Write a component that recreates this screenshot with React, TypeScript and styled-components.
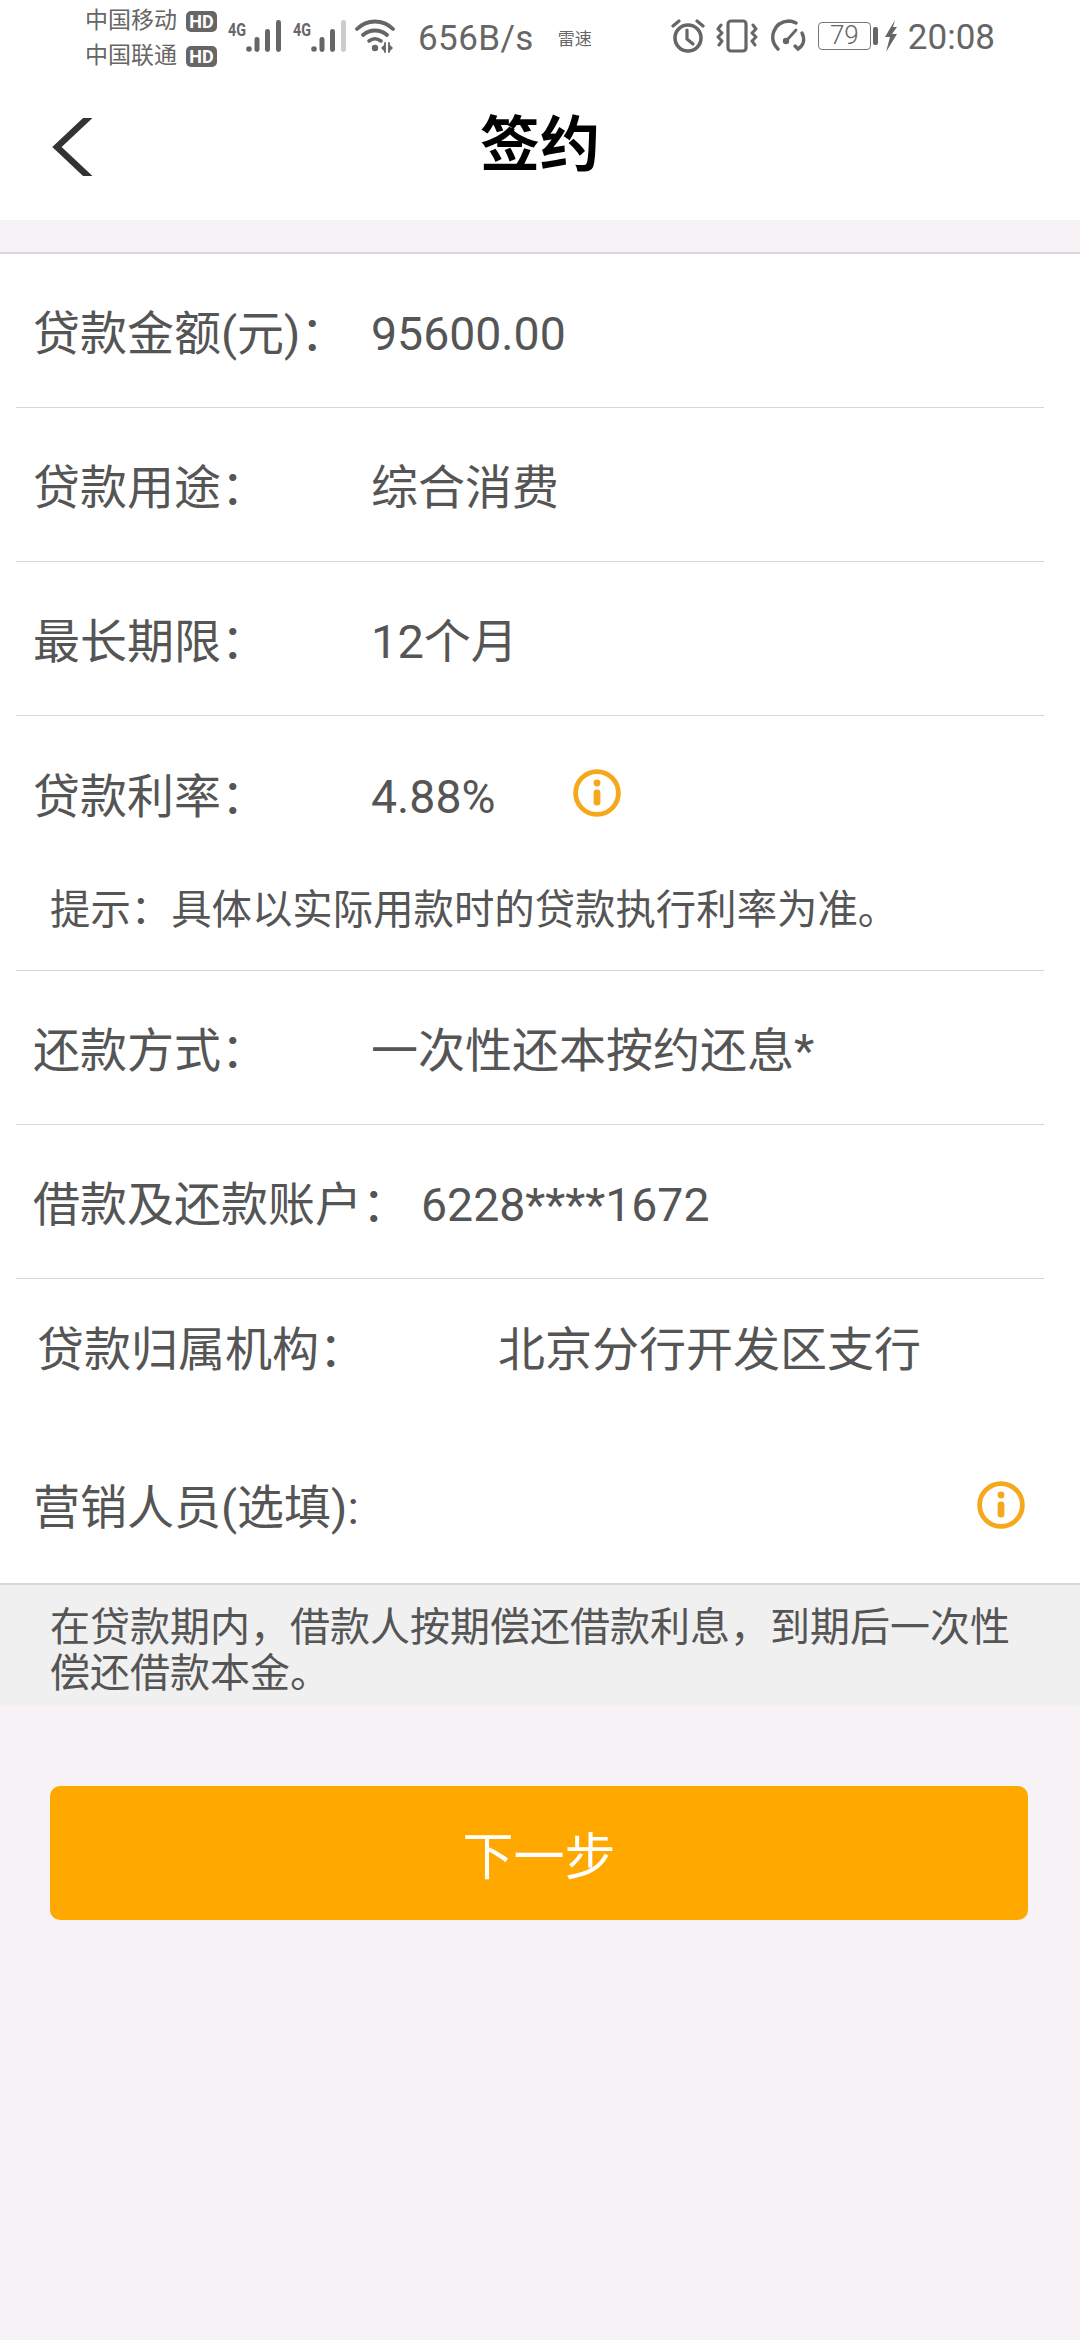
import React from 'react';
import styled, { createGlobalStyle } from 'styled-components';

const FONT = `Roboto, "Noto Sans CJK SC", sans-serif`;

const GlobalStyle = createGlobalStyle`
  html, body {
    margin: 0;
    padding: 0;
    background: #f6f2f6;
    font-family: ${FONT};
  }
`;

const Signal: React.FC<{ weak?: boolean }> = ({ weak }) => (
  <SignalWrap>
    <SignalTag>4G</SignalTag>
    <svg width="35" height="34" viewBox="0 0 35 34">
      <circle cx="3" cy="30" r="2.8" fill="#666" />
      <rect x="8.5" y="18" width="5" height="15" rx="2.4" fill="#666" />
      <rect x="19" y="10" width="5" height="23" rx="2.4" fill="#666" />
      <rect x="30" y="1" width="5" height="32" rx="2.4" fill={weak ? '#ccc' : '#666'} />
    </svg>
  </SignalWrap>
);

const Wifi = () => (
  <svg width="42" height="34" viewBox="0 0 42 34" fill="none" stroke="#666" strokeLinecap="round">
    <path d="M2 10C12 0 28 0 38 10" strokeWidth="3.8" />
    <path d="M8 16C15 10 25 10 32 16" strokeWidth="3.8" />
    <path d="M14 22C18 19 22 19 26 22" strokeWidth="3.6" />
    <circle cx="20" cy="29" r="3.2" fill="#666" stroke="none" />
    <path d="M30 24v9M34 24v9" strokeWidth="1.8" />
    <path d="M30 25l-4 4 4 4zM34 25l4 4-4 4z" fill="#666" stroke="none" />
  </svg>
);

const Alarm = () => (
  <svg width="34" height="34" viewBox="0 0 34 34" fill="none" stroke="#666" strokeLinecap="round">
    <circle cx="17" cy="19" r="13" strokeWidth="3.6" />
    <path d="M16 11v9l6 5" strokeWidth="3.2" />
    <path d="M2 7l6-5M32 7l-6-5" strokeWidth="3.2" />
  </svg>
);

const Vibrate = () => (
  <svg width="42" height="34" viewBox="0 0 42 34" fill="none" stroke="#666" strokeLinecap="round" strokeLinejoin="round">
    <rect x="12" y="2" width="18" height="30" rx="3" strokeWidth="3.2" />
    <path d="M5 6l-3 4 4 4-4 4 4 4-3 4" strokeWidth="3" />
    <path d="M37 6l3 4-4 4 4 4-4 4 3 4" strokeWidth="3" />
  </svg>
);

const Gauge = () => (
  <svg width="38" height="34" viewBox="0 0 38 34" fill="none" stroke="#666" strokeLinecap="round">
    <path d="M9 30C-1 20 4 3 20 2c3 0 5 1 7 2" strokeWidth="3.4" />
    <path d="M33 14c3 6 2 12-4 16l-3-3" strokeWidth="3.4" />
    <path d="M18 21l9-10" strokeWidth="2.8" />
    <circle cx="17" cy="22" r="3.2" fill="#666" stroke="none" />
  </svg>
);

const InfoIcon = () => (
  <svg width="48" height="48" viewBox="0 0 48 48">
    <circle cx="24" cy="24" r="21.4" fill="none" stroke="#f5a81c" strokeWidth="4.8" />
    <circle cx="24" cy="14" r="3.4" fill="#f5a81c" />
    <rect x="20.6" y="20.5" width="6.8" height="16" rx="3.2" fill="#f5a81c" />
  </svg>
);

const Row: React.FC<{
  label: string;
  value: string;
  valueAt?: number;
  numeric?: boolean;
}> = ({ label, value, valueAt = 338, numeric }) => (
  <RowBox>
    <Label $width={valueAt}>{label}</Label>
    <Value $numeric={numeric}>{value}</Value>
  </RowBox>
);

export default function App() {
  return (
    <Page>
      <GlobalStyle />
      <StatusBar>
        <Carriers>
          <CarrierLine>
            中国移动<HdBadge>HD</HdBadge>
          </CarrierLine>
          <CarrierLine>
            中国联通<HdBadge>HD</HdBadge>
          </CarrierLine>
        </Carriers>
        <Signal />
        <Signal weak />
        <WifiSlot>
          <Wifi />
        </WifiSlot>
        <Speed>656B/s</Speed>
        <AppTag>雷速</AppTag>
        <StatusRight>
          <Alarm />
          <Vibrate />
          <Gauge />
          <Battery>79</Battery>
          <BatteryNub />
          <BoltIcon width="14" height="32" viewBox="0 0 14 32">
            <path d="M11 0L1 17h5L2 32l11-18H8l5-7H9z" fill="#666" />
          </BoltIcon>
          <Clock>20:08</Clock>
        </StatusRight>
      </StatusBar>

      <Header>
        <BackButton>
          <svg width="40" height="58" viewBox="0 0 40 58" fill="none">
            <path d="M39 -3L5 29l34 32" stroke="#333" strokeWidth="6.5" />
          </svg>
        </BackButton>
        <Title>签约</Title>
      </Header>

      <Form>
        <Row label="贷款金额(元)：" value="95600.00" numeric />
        <Row label="贷款用途：" value="综合消费" />
        <Row label="最长期限：" value="12个月" />
        <RateBlock>
          <RateRow>
            <Label $width={338}>贷款利率：</Label>
            <RateValue $numeric>4.88%</RateValue>
            <InfoIcon />
          </RateRow>
          <Hint>提示：具体以实际用款时的贷款执行利率为准。</Hint>
        </RateBlock>
        <Row label="还款方式：" value="一次性还本按约还息*" />
        <Row label="借款及还款账户：" value="6228****1672" valueAt={388} numeric />
        <OrgRow>
          <Label $width={461}>贷款归属机构：</Label>
          <Value>北京分行开发区支行</Value>
        </OrgRow>
        <SalesRow>
          <Label $width={500}>营销人员(选填):</Label>
          <InfoIcon />
        </SalesRow>
      </Form>

      <Note>在贷款期内，借款人按期偿还借款利息，到期后一次性偿还借款本金。</Note>

      <NextButton>下一步</NextButton>
    </Page>
  );
}

// Styled Components

const Page = styled.div`
  width: 1080px;
  height: 2340px;
  background: #f6f2f6;
  overflow: hidden;
  font-family: ${FONT};
`;

const StatusBar = styled.div`
  height: 72px;
  background: #fff;
  display: flex;
  align-items: center;
  padding-left: 85px;
  color: #666;
  box-sizing: border-box;
`;

const Carriers = styled.div`
  width: 143px;
  display: flex;
  flex-direction: column;
  gap: 5px;
  margin-top: 5px;
`;

const CarrierLine = styled.div`
  display: flex;
  align-items: center;
  font-size: 23px;
  line-height: 30px;
`;

const HdBadge = styled.span`
  margin-left: 9px;
  width: 31px;
  height: 21px;
  border-radius: 5px;
  background: #666;
  color: #fff;
  font-size: 18px;
  line-height: 21px;
  font-weight: 700;
  text-align: center;
`;

const SignalWrap = styled.div`
  display: flex;
  align-items: flex-start;
  width: 65px;
  height: 36px;
  margin-top: 2px;
`;

const SignalTag = styled.span`
  width: 18px;
  font-size: 18px;
  line-height: 22px;
  font-weight: 700;
  transform: scaleX(0.8);
  transform-origin: left;
  color: #666;
`;

const WifiSlot = styled.div`
  margin-left: -3px;
  display: flex;
`;

const Speed = styled.div`
  margin-left: 21px;
  margin-top: 5px;
  font-size: 35px;
  line-height: 40px;
  letter-spacing: 0.4px;
`;

const AppTag = styled.div`
  margin-left: 24px;
  margin-top: 5px;
  font-size: 17px;
  line-height: 20px;
`;

const StatusRight = styled.div`
  margin-left: auto;
  margin-right: 85px;
  display: flex;
  align-items: center;
  gap: 11px;
`;

const Battery = styled.div`
  width: 53px;
  height: 28px;
  box-sizing: border-box;
  border: 1.5px solid #777;
  border-radius: 4px;
  font-size: 26px;
  line-height: 25px;
  text-align: center;
  font-weight: 300;
`;

const BatteryNub = styled.div`
  width: 5px;
  height: 18px;
  border-radius: 2px;
  background: #666;
  margin-left: -9px;
`;

const BoltIcon = styled.svg`
  margin-left: -5px;
`;

const Clock = styled.div`
  font-size: 35px;
  line-height: 40px;
  margin-left: -1px;
  margin-top: 3px;
`;

const Header = styled.div`
  height: 148px;
  background: #fff;
  position: relative;
  display: flex;
  align-items: center;
  justify-content: center;
`;

const BackButton = styled.div`
  position: absolute;
  left: 52px;
  top: 46px;
  display: flex;
`;

const Title = styled.h1`
  margin: 0;
  font-size: 60px;
  line-height: 70px;
  font-weight: 700;
  color: #000;
`;

const Form = styled.div`
  margin-top: 32px;
  background: #fff;
  border-top: 2px solid #d8d6d8;
  border-bottom: 2px solid #d8d6d8;
  display: flex;
  flex-direction: column;
`;

const RowBox = styled.div`
  height: 153px;
  margin: 0 36px 0 16px;
  padding-left: 17px;
  display: flex;
  align-items: center;
  border-bottom: 1px solid #d8d6d8;
`;

const Label = styled.div<{ $width: number }>`
  width: ${(p) => p.$width}px;
  flex: none;
  padding-top: 7px;
  font-size: 47px;
  line-height: 60px;
  color: #555;
`;

const Value = styled.div<{ $numeric?: boolean }>`
  padding-top: 7px;
  font-size: ${(p) => (p.$numeric ? '46.4px' : '47px')};
  line-height: 60px;
  color: #555;
`;

const RateBlock = styled.div`
  margin: 0 36px 0 16px;
  height: 254px;
  border-bottom: 1px solid #d8d6d8;
  display: flex;
  flex-direction: column;
`;

const RateRow = styled.div`
  height: 154px;
  padding-left: 17px;
  display: flex;
  align-items: center;
`;

const RateValue = styled(Value)`
  width: 202px;
`;

const Hint = styled.div`
  padding-left: 34px;
  font-size: 40.4px;
  line-height: 56px;
  margin-top: 13px;
  color: #555;
`;

const OrgRow = styled.div`
  height: 147px;
  box-sizing: border-box;
  padding: 34px 0 0 37px;
  display: flex;
  align-items: flex-start;
`;

const SalesRow = styled.div`
  height: 157px;
  padding-left: 33px;
  padding-right: 55px;
  display: flex;
  align-items: center;
  justify-content: space-between;
`;

const Note = styled.div`
  background: #f0f0f0;
  height: 121px;
  padding: 20px 50px 0;
  box-sizing: border-box;
  font-size: 40px;
  line-height: 46px;
  color: #555;
`;

const NextButton = styled.button`
  display: block;
  margin: 80px 52px 0 50px;
  width: 978px;
  height: 134px;
  background: #ffa800;
  border: none;
  border-radius: 10px;
  color: #fff;
  font-family: ${FONT};
  font-size: 51px;
`;
